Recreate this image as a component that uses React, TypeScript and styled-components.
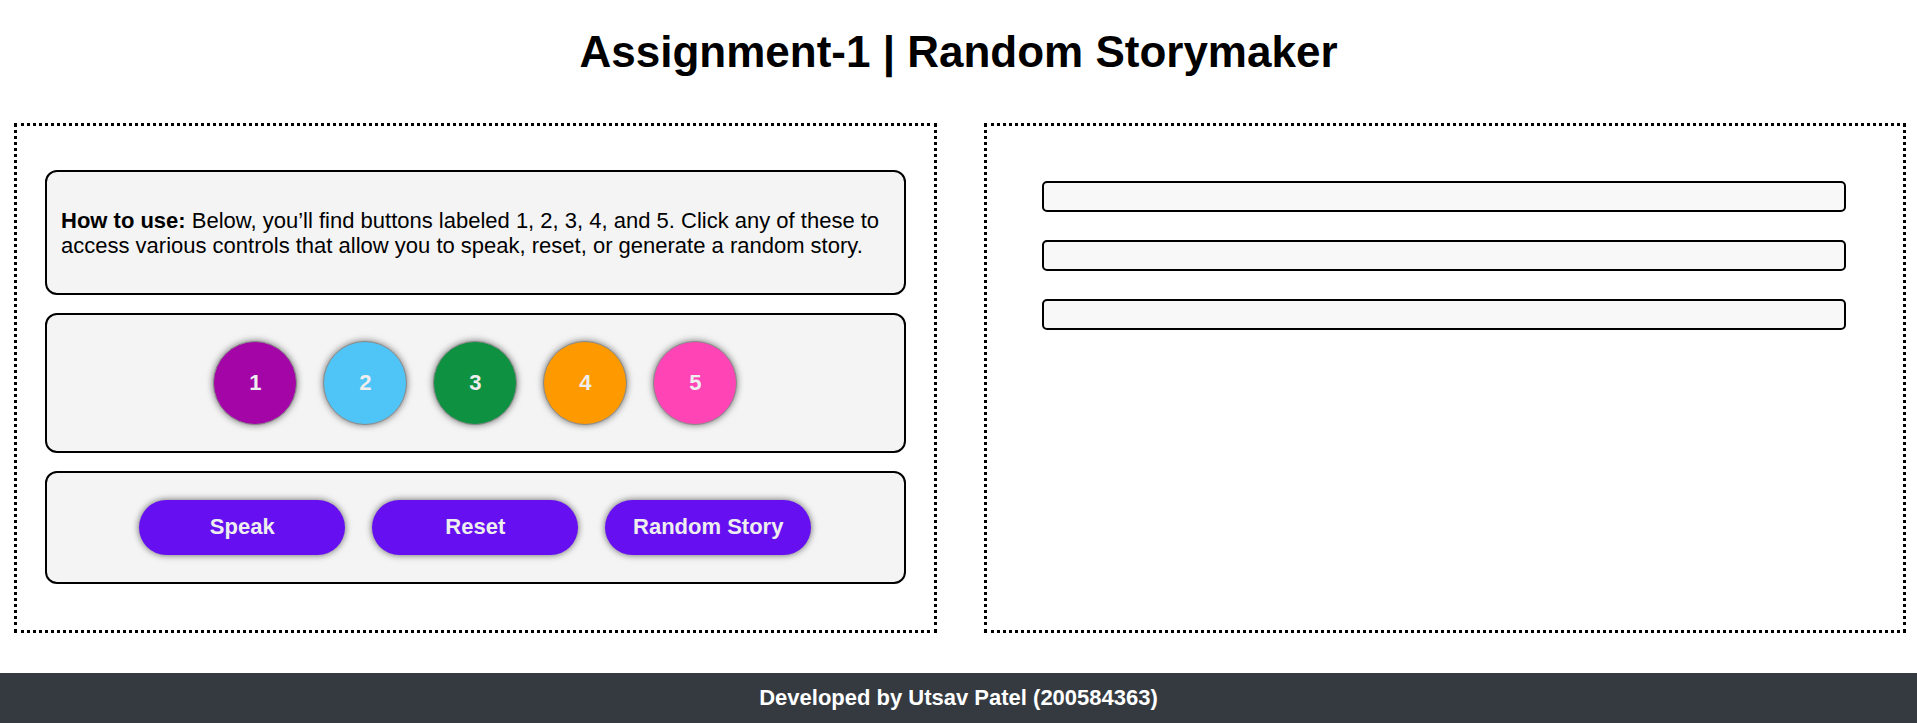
import React from "react";
import styled, { createGlobalStyle } from "styled-components";

const GlobalStyle = createGlobalStyle`
  html, body {
    margin: 0;
    padding: 0;
    background: #ffffff;
    font-family: "Liberation Sans", Arial, sans-serif;
    color: #000;
  }
  * { box-sizing: border-box; }
`;

const Page = styled.div`
  display: flex;
  flex-direction: column;
  width: 100%;
`;

const Header = styled.header`
  padding: 26px 0 46px;
  text-align: center;
`;

const Title = styled.h1`
  margin: 0;
  font-size: 44px;
  line-height: 51px;
  font-weight: 700;
`;

const Main = styled.main`
  display: grid;
  grid-template-columns: 1fr 1fr;
  gap: 47px;
  padding: 0 11px 0 14px;
`;

const Panel = styled.section<{ $pad: string }>`
  min-width: 0;
  border: 3px dotted #000;
  padding: ${(p) => p.$pad};
  display: flex;
  flex-direction: column;
`;

const Card = styled.div<{ $gap?: number }>`
  background: #f4f4f4;
  border: 2px solid #000;
  border-radius: 12px;
  margin-top: ${(p) => p.$gap ?? 0}px;
`;

const InfoCard = styled(Card)`
  padding: 36px 12px 34px 14px;
  font-size: 22px;
  line-height: 25.3px;
`;

const Row = styled(Card)<{ $pad: number; $spacing: number }>`
  display: flex;
  justify-content: center;
  align-items: center;
  gap: ${(p) => p.$spacing}px;
  padding: ${(p) => p.$pad}px 0;
`;

const Circle = styled.button<{ $bg: string }>`
  width: 84px;
  height: 84px;
  border-radius: 50%;
  border: 1px solid #8a8a8a;
  background: ${(p) => p.$bg};
  color: #eeeeee;
  font-family: "Liberation Sans", Arial, sans-serif;
  font-weight: 700;
  font-size: 22px;
  box-shadow: 0 0 7px rgba(0, 0, 0, 0.55);
  padding: 0;
  cursor: pointer;
`;

const Pill = styled.button`
  width: 206px;
  height: 55px;
  border-radius: 28px;
  border: none;
  background: #6610f2;
  color: #eeeeee;
  font-family: "Liberation Sans", Arial, sans-serif;
  font-weight: 700;
  font-size: 22px;
  box-shadow: 0 0 7px rgba(0, 0, 0, 0.6);
  cursor: pointer;
`;

const Field = styled.div<{ $gap?: number }>`
  height: 31px;
  background: #f8f8f8;
  border: 2px solid #000;
  border-radius: 5px;
  margin-top: ${(p) => p.$gap ?? 0}px;
`;

const Footer = styled.footer`
  margin-top: 40px;
  height: 50px;
  background: #343a40;
  color: #ffffff;
  font-weight: 700;
  font-size: 22px;
  display: flex;
  align-items: center;
  justify-content: center;
`;

const circles = [
  { n: "1", c: "#a305a6" },
  { n: "2", c: "#4fc4f7" },
  { n: "3", c: "#0f9142" },
  { n: "4", c: "#ff9900" },
  { n: "5", c: "#ff44b5" },
];

export default function App() {
  return (
    <>
      <GlobalStyle />
      <Page>
        <Header>
          <Title>Assignment-1 | Random Storymaker</Title>
        </Header>
        <Main>
          <Panel $pad="44px 28px 46px">
            <InfoCard>
              <b>How to use:</b> Below, you’ll find buttons labeled 1, 2, 3, 4,
              and 5. Click any of these to access various controls that allow
              you to speak, reset, or generate a random story.
            </InfoCard>
            <Row $gap={18} $pad={26} $spacing={26}>
              {circles.map((c) => (
                <Circle key={c.n} $bg={c.c}>
                  {c.n}
                </Circle>
              ))}
            </Row>
            <Row $gap={18} $pad={27} $spacing={27}>
              <Pill>Speak</Pill>
              <Pill>Reset</Pill>
              <Pill>Random Story</Pill>
            </Row>
          </Panel>
          <Panel $pad="55px 57px 0 55px">
            <Field />
            <Field $gap={28} />
            <Field $gap={28} />
          </Panel>
        </Main>
        <Footer>Developed by Utsav Patel (200584363)</Footer>
      </Page>
    </>
  );
}
